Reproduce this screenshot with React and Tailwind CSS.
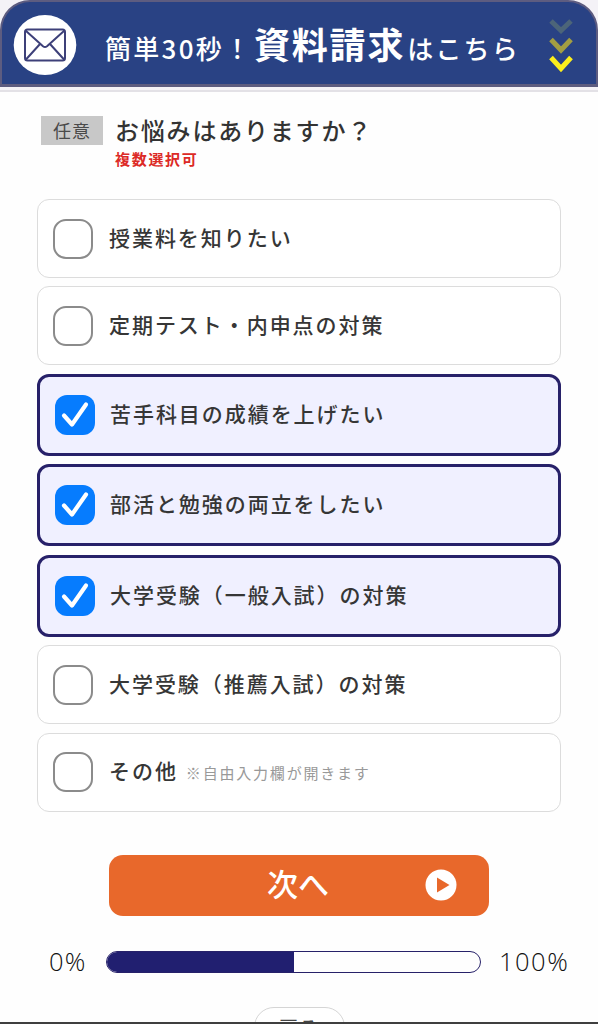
import React, { useState } from "react";
import clsx from "clsx";

const options = [
  { id: "fee", label: "授業料を知りたい" },
  { id: "test", label: "定期テスト・内申点の対策" },
  { id: "weak", label: "苦手科目の成績を上げたい" },
  { id: "club", label: "部活と勉強の両立をしたい" },
  { id: "general", label: "大学受験（一般入試）の対策" },
  { id: "recommend", label: "大学受験（推薦入試）の対策" },
  { id: "other", label: "その他", note: "※自由入力欄が開きます" },
];

const MailIcon = () => (
  <svg viewBox="0 0 64 60" className="w-16 h-[60px]" fill="none">
    <ellipse cx="32" cy="30" rx="31.3" ry="30" fill="#fff" />
    <g stroke="#3d4079" strokeWidth="2" strokeLinejoin="round">
      <rect x="12" y="14.5" width="40" height="31" rx="2.5" />
      <path d="M12.5 15.5 30 31.2q2 1.6 4 0L51.5 15.5M12.5 45 27 29M51.5 45 37 29" />
    </g>
  </svg>
);

const Chevrons = () => (
  <svg viewBox="0 0 26 56" className="w-[26px] h-14" fill="none" strokeWidth="5">
    <path d="M3 4 13 13.5 23 4" stroke="#4c6579" />
    <path d="M3 22.5 13 33 23 22.5" stroke="#a39e42" />
    <path d="M3 40.5 13 51.5 23 40.5" stroke="#fbee1c" />
  </svg>
);

const Header = () => (
  <div className="h-[92px] shrink-0 bg-[#f4f2f7] border-b-2 border-[#e3e1e6]">
    <header className="flex items-center h-[87px] bg-[#294284] border-2 border-b-3 border-[#5d5c80] rounded-t-[30px] pt-[3px] pl-[11px] pr-[22px] text-white font-medium">
      <MailIcon />
      <h1 className="flex items-baseline ml-[28px] -mt-[3px] whitespace-nowrap text-[26px] leading-none tracking-[2px]">
        <span className="w-[149px] tracking-[2.3px]">簡単30秒！</span>
        <span className="text-[36px] tracking-[1.8px] font-bold">資料請求</span>
        <span className="ml-0.5 tracking-[2.2px]">はこちら</span>
      </h1>
      <div className="ml-auto">
        <Chevrons />
      </div>
    </header>
  </div>
);

const CheckMark = ({ checked }) =>
  checked ? (
    <span className="flex items-center justify-center w-10 h-10 shrink-0 rounded-xl bg-[#067cfe]">
      <svg viewBox="0 0 40 40" className="w-10 h-10" fill="none">
        <path
          d="M9 20.5 17 29.5 31 9.5"
          stroke="#fff"
          strokeWidth="4.2"
          strokeLinecap="round"
          strokeLinejoin="round"
        />
      </svg>
    </span>
  ) : (
    <span className="w-10 h-10 shrink-0 rounded-[13px] border-2 border-[#8b8b8b] bg-white" />
  );

const Option = ({ option, checked, onToggle }) => (
  <button
    type="button"
    role="checkbox"
    aria-checked={checked}
    onClick={onToggle}
    className={clsx(
      "flex items-center w-full rounded-xl text-left text-[21px] leading-none tracking-[1.95px] font-medium text-[#363636] whitespace-nowrap",
      checked
        ? "h-[82px] pl-[15px] border-3 border-[#272169] bg-[#f0f0ff]"
        : "h-[79px] pl-[15px] border-[1.5px] border-[#dcdcdc] bg-white"
    )}
  >
    <CheckMark checked={checked} />
    <span className={clsx("-mt-[3px]", checked ? "ml-[15px]" : "ml-4")}>
      {option.label}
    </span>
    {option.note && (
      <span className="ml-2 mt-px text-[15px] tracking-[1.8px] font-normal text-[#999]">
        {option.note}
      </span>
    )}
  </button>
);

const Progress = ({ value }) => (
  <div className="flex items-center mt-[34px] pl-[49px] text-[25.5px] leading-7 text-[#111]">
    <span className="w-[57px] -mt-[3px] font-['Open_Sans',sans-serif] font-[350] tracking-[1.2px]">
      0%
    </span>
    <div className="w-[375px] h-[22px] shrink-0 rounded-full border-[1.5px] border-[#272169] overflow-hidden">
      <div className="h-full bg-[#211f70]" style={{ width: `${value}%` }} />
    </div>
    <span className="ml-[18px] -mt-[3px] font-['Open_Sans',sans-serif] font-[350] tracking-[1.5px]">
      100%
    </span>
  </div>
);

export default function App() {
  const [selected, setSelected] = useState(["weak", "club", "general"]);

  const toggle = (id) =>
    setSelected((prev) =>
      prev.includes(id) ? prev.filter((v) => v !== id) : [...prev, id]
    );

  return (
    <div className="flex flex-col h-[1024px] overflow-hidden bg-[#fefefe] border-b-2 border-[#3f3f3f] font-['Noto_Sans_CJK_JP',sans-serif]">
      <Header />
      <main className="shrink-0">
        <div className="flex items-start h-[107px] pl-[41px] pt-6">
          <span className="flex items-center justify-center w-[62px] h-[29px] pb-0.5 bg-[#c8c8c8] text-[18px] leading-none tracking-[1px] text-[#4a4a4a]">
            任意
          </span>
          <div className="ml-3 -mt-px font-medium">
            <h2 className="text-[24px] leading-[30px] tracking-[1.8px] text-[#333]">
              お悩みはありますか？
            </h2>
            <p className="mt-[5px] text-[15px] leading-[18px] tracking-[1.7px] font-bold text-[#dc2a26]">
              複数選択可
            </p>
          </div>
        </div>

        <div className="flex flex-col gap-[8.45px] px-[37px]">
          {options.map((option) => (
            <Option
              key={option.id}
              option={option}
              checked={selected.includes(option.id)}
              onToggle={() => toggle(option.id)}
            />
          ))}
        </div>

        <button
          type="button"
          className="flex items-center w-[380px] h-[61px] mt-[43px] mx-auto pl-[158px] pr-8 rounded-[14px] bg-[#e8682b] text-white text-[31px] leading-none font-medium"
        >
          <span className="-mt-1.5">次へ</span>
          <svg viewBox="0 0 32 32" className="w-8 h-8 ml-auto">
            <circle cx="16" cy="16" r="15.5" fill="#fff" />
            <path d="M12 8.5v15L24.5 16z" fill="#e8682b" />
          </svg>
        </button>

        <Progress value={50} />

        <button
          type="button"
          className="block w-[91px] h-10 mt-[32px] mx-auto rounded-full border-[1.5px] border-[#d5d5d5] bg-white text-[19px] leading-[30px] tracking-[1px] text-[#444]"
        >
          戻る
        </button>
      </main>
    </div>
  );
}
